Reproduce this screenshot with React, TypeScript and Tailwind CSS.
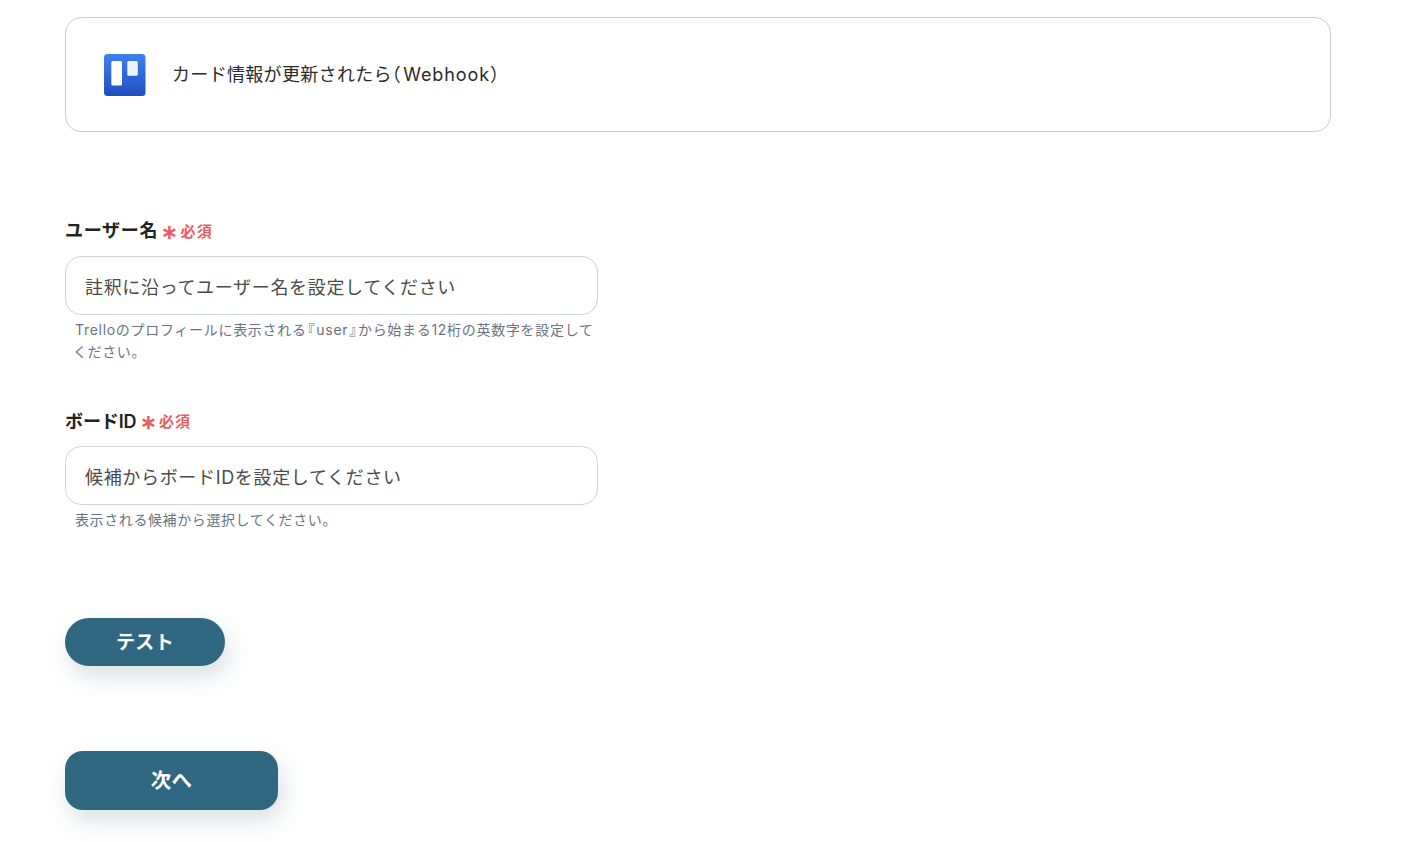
import React from 'react';

const FONT = 'font-["Inter","Noto_Sans_CJK_JP",sans-serif]';

const TrelloIcon: React.FC = () => (
  <svg width="42" height="42" viewBox="0 0 42 42" className="shrink-0">
    <defs>
      <linearGradient id="trello-bg" x1="0" y1="0" x2="0" y2="1">
        <stop offset="0" stopColor="#3f7ff0" />
        <stop offset="1" stopColor="#1f4fc0" />
      </linearGradient>
    </defs>
    <rect width="41.5" height="42" rx="3.5" fill="url(#trello-bg)" />
    <rect x="7.3" y="7" width="10.7" height="24.5" rx="1.5" fill="#fff" />
    <rect x="23.3" y="7" width="10.5" height="14.8" rx="1.5" fill="#eef3fd" />
  </svg>
);

// half-width bracket, the way the original font sets them
const Bracket: React.FC<{ children: React.ReactNode; className?: string }> = ({ children, className }) => (
  <span className={`[font-feature-settings:'halt'] ${className ?? ''}`}>{children}</span>
);

const Field: React.FC<{
  label: string;
  labelClass: string;
  placeholder: string;
  help: React.ReactNode;
}> = ({ label, labelClass, placeholder, help }) => (
  <div className="w-[533px]">
    <div className="flex items-center h-[28px] text-[18px] font-semibold text-[#222222]">
      <span className={labelClass}>{label}</span>
      <span className="ml-[3px] mt-[3px] text-[20px] leading-none font-bold text-[#ec5a62]">∗</span>
      <span className="ml-[2px] mt-[4px] text-[15px] tracking-[0.07em] font-semibold text-[#ec5a62]">必須</span>
    </div>
    <div className="mt-[12px] h-[59px] flex items-center pl-[19px] pt-[3px] rounded-[16px] border border-[#cfd4dc] bg-white text-[18px] tracking-[0.037em] text-[#4a4a4a]">
      {placeholder}
    </div>
    <p className="mt-[4px] pl-[10px] text-[14px] leading-[22px] tracking-[0.043em] text-[#6b7280]">{help}</p>
  </div>
);

export default function App() {
  return (
    <div className={`${FONT} min-h-[842px] bg-white px-[65px] pt-[17px] tracking-[0.02em] overflow-hidden`}>
      <div className="w-[1266px] h-[115px] flex items-center gap-[26px] pl-[38px] rounded-[16px] border border-[#c9cdd2]">
        <TrelloIcon />
        <span className="text-[18px] text-[#2a2a2a]">カード情報が更新されたら<Bracket className="mr-[2px]">（</Bracket><span className="tracking-[0.05em]">Webhook</span><Bracket>）</Bracket></span>
      </div>

      <div className="mt-[84px]">
        <Field
          label="ユーザー名"
          labelClass="tracking-[0.04em]"
          placeholder="註釈に沿ってユーザー名を設定してください"
          help={<><span className="tracking-[0.05em]">Trelloのプロフィールに表示される<Bracket className="px-[1px]">『</Bracket>user<Bracket className="px-[1px]">』</Bracket>から始まる12桁の英数字を設定して</span><br /><span className="-ml-[2px]">ください。</span></>}
        />
      </div>
      <div className="mt-[43px]">
        <Field
          label="ボードID"
          labelClass="mt-[2px] tracking-[-0.005em]"
          placeholder="候補からボードIDを設定してください"
          help="表示される候補から選択してください。"
        />
      </div>

      <button className="block mt-[87px] w-[160px] h-[48px] pt-[2px] rounded-full bg-[#2f6781] text-white text-[19px] font-semibold shadow-[4px_10px_24px_rgba(47,70,90,0.18)]">
        テスト
      </button>
      <button className="block mt-[85px] w-[213px] h-[59px] pt-[1px] rounded-[18px] bg-[#2f6781] text-white text-[20.5px] font-semibold shadow-[4px_10px_24px_rgba(47,70,90,0.18)]">
        次へ
      </button>
    </div>
  );
}
